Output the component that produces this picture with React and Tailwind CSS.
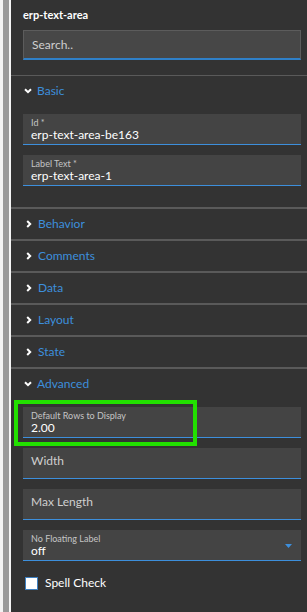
const sections = ['Behavior', 'Comments', 'Data', 'Layout', 'State'];

function Chevron({ open }) {
  return open ? (
    <svg width="8" height="6" viewBox="0 0 8 6" className="shrink-0">
      <path d="M1 1.2l3 3 3-3" fill="none" stroke="#fff" strokeWidth="2" />
    </svg>
  ) : (
    <svg width="6" height="8" viewBox="0 0 6 8" className="shrink-0">
      <path d="M1.2 1l3 3-3 3" fill="none" stroke="#fff" strokeWidth="2" />
    </svg>
  );
}

function SectionHeader({ label, open }) {
  return (
    <div className={`flex h-[30px] items-center ${open ? 'gap-[5px] pl-[13px]' : 'gap-[6px] pl-[15px]'}`}>
      <Chevron open={open} />
      <span className="text-[12px] text-[#3d8fdc]">{label}</span>
    </div>
  );
}

function Field({ label, value, placeholder, select }) {
  return (
    <div className="relative flex h-[31px] flex-col justify-center border-b border-[#3d8fdc] bg-[#444444] pl-[8px]">
      {placeholder ? (
        <span className="pb-[5px] text-[12px] text-[#cfcfcf]">{placeholder}</span>
      ) : (
        <>
          <span className="text-[9px] leading-[11px] text-[#c4c4c4]">{label}</span>
          <span className="text-[12px] leading-[14px] text-white">{value}</span>
        </>
      )}
      {select ? (
        <svg className="absolute right-[9px] top-[14px]" width="7" height="4" viewBox="0 0 7 4">
          <path d="M0 0h7L3.5 4z" fill="#3d8fdc" />
        </svg>
      ) : null}
    </div>
  );
}

export default function App() {
  return (
    <div className="flex h-[612px] w-[307px] overflow-hidden font-['Lato',sans-serif]">
      <div className="w-[3px] bg-[#f3f3f3]" />
      <div className="w-[6px] bg-[#999999]" />
      <div className="w-[2px] bg-[#f5f5f5]" />
      <div className="relative flex flex-1 flex-col bg-[#333333]">
        <div className="px-[12px] pr-[6px]">
          <div className="flex h-[30px] items-center text-[11px] font-bold text-white">erp-text-area</div>
          <div className="flex h-[30px] items-center border border-b-2 border-[#5c5c5c] border-b-[#2f80c8] bg-[#474747] pl-[8px] text-[12px] text-[#cfcfcf]">
            Search..
          </div>
        </div>
        <div className="mt-[15px] border-t border-[#5a5a5a]">
          <SectionHeader label="Basic" open />
          <div className="flex flex-col gap-[10px] px-[12px] pr-[6px] pb-[21px] pt-[8px]">
            <Field label="Id *" value="erp-text-area-be163" />
            <Field label="Label Text *" value="erp-text-area-1" />
          </div>
        </div>
        {sections.map((s) => (
          <div key={s} className="border-t-2 border-[#5a5a5a]">
            <SectionHeader label={s} />
          </div>
        ))}
        <div className="border-t-2 border-[#5a5a5a]">
          <SectionHeader label="Advanced" open />
          <div className="flex flex-col gap-[10px] px-[12px] pr-[6px] pt-[8px]">
            <Field label="Default Rows to Display" value="2.00" />
            <Field placeholder="Width" />
            <Field placeholder="Max Length" />
            <Field label="No Floating Label" value="off" select />
          </div>
          <div className="flex items-center gap-[7px] pl-[14px] pt-[13px]">
            <div className="h-[13px] w-[13px] border border-[#3d7fc0] bg-white" />
            <span className="text-[12px] text-white">Spell Check</span>
          </div>
        </div>
        <div className="pointer-events-none absolute left-[3px] top-[400px] h-[46px] w-[183px] border-[4px] border-[#22e000]" />
      </div>
    </div>
  );
}
